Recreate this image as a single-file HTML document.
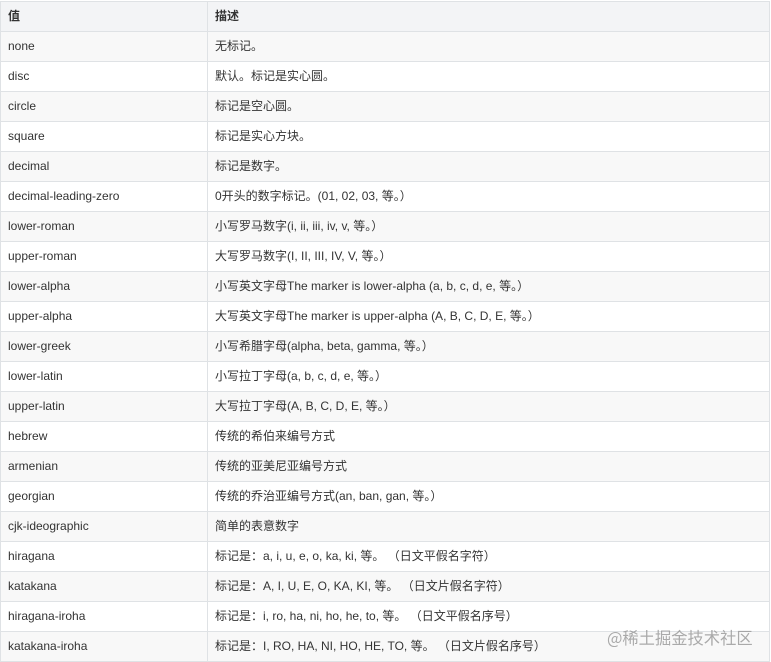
<!DOCTYPE html>
<html><head><meta charset="utf-8"><style>
body{margin:0;background:#fff;width:771px;height:662px;overflow:hidden;position:relative}
table{border-collapse:collapse;position:absolute;left:0;top:1px;width:770px;font-family:"Liberation Sans","Noto Sans CJK SC",sans-serif;font-size:12px;color:#333}
td,th{border:1px solid #dfe2e5;height:29px;padding:0 0 0 7px;text-align:left;font-weight:normal;line-height:29px;white-space:nowrap}
th{font-weight:bold;background:#f3f4f6;height:29px}
td:first-child,th:first-child{width:199px}
tr:nth-child(even) td{background:#f8f8f8}
.wm{position:absolute;left:607px;top:625px;font-family:"Noto Sans CJK SC",sans-serif;font-size:16.3px;color:rgba(150,150,150,.8);letter-spacing:0}
</style></head><body>
<table>
<tr><th>值</th><th>描述</th></tr>
<tr><td>none</td><td>无标记。</td></tr>
<tr><td>disc</td><td>默认。标记是实心圆。</td></tr>
<tr><td>circle</td><td>标记是空心圆。</td></tr>
<tr><td>square</td><td>标记是实心方块。</td></tr>
<tr><td>decimal</td><td>标记是数字。</td></tr>
<tr><td>decimal-leading-zero</td><td>0开头的数字标记。(01, 02, 03, 等。）</td></tr>
<tr><td>lower-roman</td><td>小写罗马数字(i, ii, iii, iv, v, 等。）</td></tr>
<tr><td>upper-roman</td><td>大写罗马数字(I, II, III, IV, V, 等。）</td></tr>
<tr><td>lower-alpha</td><td>小写英文字母The marker is lower-alpha (a, b, c, d, e, 等。）</td></tr>
<tr><td>upper-alpha</td><td>大写英文字母The marker is upper-alpha (A, B, C, D, E, 等。）</td></tr>
<tr><td>lower-greek</td><td>小写希腊字母(alpha, beta, gamma, 等。）</td></tr>
<tr><td>lower-latin</td><td>小写拉丁字母(a, b, c, d, e, 等。）</td></tr>
<tr><td>upper-latin</td><td>大写拉丁字母(A, B, C, D, E, 等。）</td></tr>
<tr><td>hebrew</td><td>传统的希伯来编号方式</td></tr>
<tr><td>armenian</td><td>传统的亚美尼亚编号方式</td></tr>
<tr><td>georgian</td><td>传统的乔治亚编号方式(an, ban, gan, 等。）</td></tr>
<tr><td>cjk-ideographic</td><td>简单的表意数字</td></tr>
<tr><td>hiragana</td><td>标记是：a, i, u, e, o, ka, ki, 等。 （日文平假名字符）</td></tr>
<tr><td>katakana</td><td>标记是：A, I, U, E, O, KA, KI, 等。 （日文片假名字符）</td></tr>
<tr><td>hiragana-iroha</td><td>标记是：i, ro, ha, ni, ho, he, to, 等。 （日文平假名序号）</td></tr>
<tr><td>katakana-iroha</td><td>标记是：I, RO, HA, NI, HO, HE, TO, 等。 （日文片假名序号）</td></tr>
</table>
<div class="wm">@稀土掘金技术社区</div>
</body></html>
